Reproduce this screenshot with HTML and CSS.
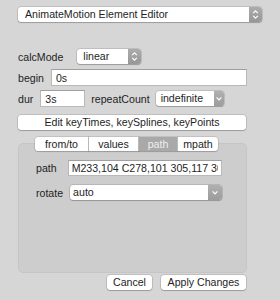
FILE: index.html
```html
<!DOCTYPE html>
<html lang="en">
<head>
    <meta charset="UTF-8">
    <title>AnimateMotion Element Editor</title>
    <link rel="stylesheet" href="styles.css">
</head>
<body>

<div class="editor">
    <div class="popup title">
        <span class="popup-text">AnimateMotion Element Editor</span>
        <span class="arrows">
            <svg width="13" height="15" viewBox="0 0 13 15"><path d="M4.2 6.2 L6.5 3.9 L8.8 6.2 M4.2 8.8 L6.5 11.1 L8.8 8.8" /></svg>
        </span>
    </div>

    <div class="form">
        <div class="row">
            <label>calcMode</label>
            <div class="popup mode">
                <span class="popup-text">linear</span>
                <span class="arrows">
                    <svg width="13" height="15" viewBox="0 0 13 15"><path d="M4.2 6.2 L6.5 3.9 L8.8 6.2 M4.2 8.8 L6.5 11.1 L8.8 8.8" /></svg>
                </span>
            </div>
        </div>
        <div class="row">
            <label>begin</label>
            <input class="field grow" type="text" value="0s">
        </div>
        <div class="row">
            <label>dur</label>
            <input class="field dur" type="text" value="3s">
            <label class="repeat-label">repeatCount</label>
            <div class="popup pulldown repeat">
                <span class="popup-text">indefinite</span>
                <span class="arrows">
                    <svg width="10" height="15" viewBox="0 0 10 15"><path d="M2.6 6.4 L5 8.8 L7.4 6.4" /></svg>
                </span>
            </div>
        </div>

        <button class="btn keys">Edit keyTimes, keySplines, keyPoints</button>

        <div class="tabview">
            <div class="tabs">
                <span class="tab from">from/to</span>
                <span class="tab values">values</span>
                <span class="tab path selected">path</span>
                <span class="tab mpath">mpath</span>
            </div>
            <div class="tabbox">
                <div class="row">
                    <label>path</label>
                    <input class="field path-field" type="text" value="M233,104 C278,101 305,117 30">
                </div>
                <div class="row rotate-row">
                    <label>rotate</label>
                    <div class="popup pulldown rotate">
                        <span class="popup-text">auto</span>
                        <span class="arrows">
                            <svg width="14" height="15" viewBox="0 0 14 15"><path d="M4.6 6.4 L7 8.8 L9.4 6.4" /></svg>
                        </span>
                    </div>
                </div>
            </div>
        </div>

        <div class="actions">
            <button class="btn cancel">Cancel</button>
            <button class="btn apply">Apply Changes</button>
        </div>
    </div>
</div>

</body>
</html>
```

FILE: styles.css
```css
*{
    margin: 0;
    padding: 0;
    box-sizing: border-box;
    font-family: 'Liberation Sans', Arial, sans-serif;
}

body{
    background: #d6d6d6;
    color: #1e1e1e;
    font-size: 10.6px;
}

.editor{
    width: 280px;
    height: 300px;
    padding: 7px 18px 0 18px;
}

/* popup buttons */
.popup{
    display: flex;
    align-items: center;
    height: 15px;
    background: #fff;
    border-radius: 3px;
    box-shadow: 0 0 0 0.5px rgba(0,0,0,0.22), 0 1px 1px rgba(0,0,0,0.18);
    overflow: hidden;
}
.popup-text{
    flex: 1;
    padding-left: 7px;
    line-height: 15px;
    white-space: nowrap;
    overflow: hidden;
}
.arrows{
    display: flex;
    height: 15px;
    background: linear-gradient(#acacac, #979797);
}
.arrows svg path{
    fill: none;
    stroke: #fff;
    stroke-width: 1.2;
}
.pulldown .arrows{
    background: linear-gradient(#b0b0b0, #9c9c9c);
}

.title{
    width: 244px;
}

.form{
    width: 229px;
}

.row{
    display: flex;
    align-items: center;
}
.row label{
    white-space: nowrap;
}

.form > .row:first-child{
    margin-top: 27px;
}
.form > .row + .row{
    margin-top: 5px;
}
.form > .row + .row + .row{
    margin-top: 4px;
}

.mode{
    width: 64px;
    margin-left: 14px;
}
.mode .popup-text{
    padding-left: 6px;
}

.field{
    height: 17px;
    border: 1px solid #b9b9b9;
    border-top-color: #9f9f9f;
    background: #fff;
    padding: 0 4px;
    font-size: 10.6px;
    color: #1e1e1e;
    outline: none;
}
.grow{
    flex: 1;
    margin-left: 7px;
}
.dur{
    width: 45px;
    margin-left: 7px;
}
.repeat-label{
    margin-left: 6px;
}
.repeat{
    width: 68px;
    margin-left: 6px;
}
.repeat .popup-text{
    padding-left: 5px;
}

.btn{
    height: 15px;
    border: none;
    background: #fff;
    border-radius: 3px;
    box-shadow: 0 0 0 0.5px rgba(0,0,0,0.22), 0 1px 1px rgba(0,0,0,0.18);
    font-size: 10.6px;
    color: #1e1e1e;
    line-height: 15px;
    cursor: pointer;
}
.keys{
    display: block;
    width: 228px;
    margin-top: 8px;
}

/* tab view */
.tabview{
    margin-top: 7px;
}
.tabs{
    display: flex;
    height: 14px;
    margin-left: 17px;
    position: relative;
    z-index: 1;
}
.tab{
    height: 14px;
    line-height: 14px;
    text-align: center;
    background: #fff;
    box-shadow: 0 0 0 0.5px rgba(0,0,0,0.2), 0 1px 1px rgba(0,0,0,0.15);
    border-right: 1px solid #d2d2d2;
}
.tab.from{
    width: 54px;
    border-radius: 3px 0 0 3px;
}
.tab.values{
    width: 50px;
}
.tab.path{
    width: 39px;
}
.tab.mpath{
    width: 40px;
    border-right: none;
    border-radius: 0 3px 3px 0;
}
.tab.selected{
    background: #a9a9a9;
    color: #efefef;
}

.tabbox{
    height: 130px;
    margin-top: -8px;
    padding: 16px 24px 0 17px;
    background: #cdcdcd;
    border: 1px solid #c5c5c5;
    border-radius: 5px;
}
.tabbox .row{
    margin-top: 0;
}
.path-field{
    flex: 1;
    height: 16px;
    margin-left: 11px;
    padding: 0 3px;
}
.rotate-row{
    margin-top: 9px !important;
}
.rotate{
    flex: 1;
    margin-left: 7px;
}
.rotate .popup-text{
    padding-left: 3px;
}

.actions{
    display: flex;
    justify-content: flex-end;
    gap: 9px;
    margin-top: 2px;
    padding-right: 1px;
}
.cancel{
    width: 45px;
}
.apply{
    width: 85px;
}
```
